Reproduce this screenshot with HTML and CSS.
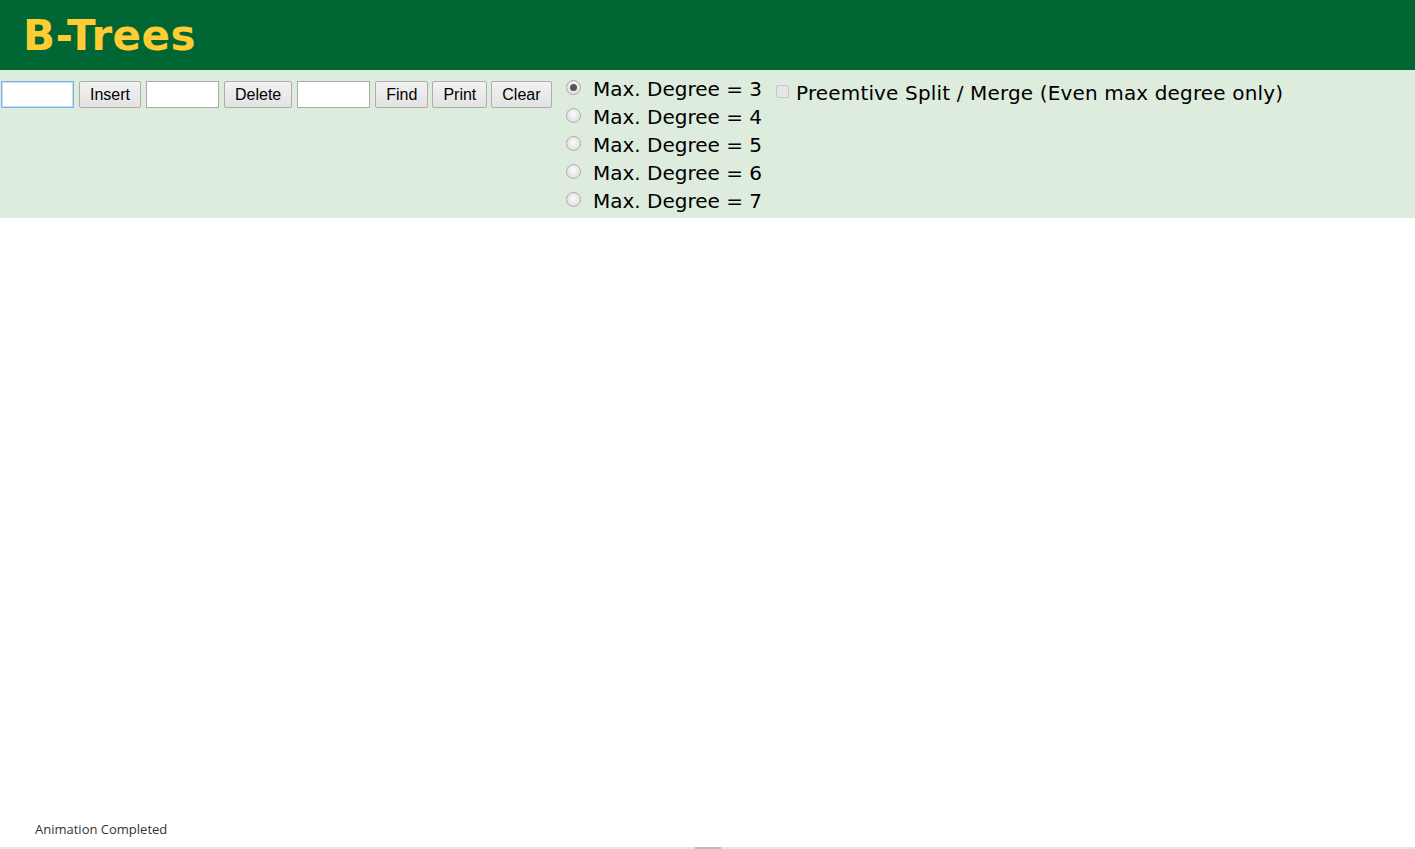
FILE: index.html
```html
<!DOCTYPE html>
<html lang="en">
<head>
  <meta charset="UTF-8">
  <title>B-Trees</title>
  <link rel="stylesheet" href="styles.css">
</head>
<body>
  <div class="header">
    <h1>B-Trees</h1>
  </div>

  <div class="controls">
    <div class="ops">
      <input type="text" class="field focused">
      <button>Insert</button>
      <input type="text" class="field">
      <button>Delete</button>
      <input type="text" class="field">
      <button>Find</button>
      <button>Print</button>
      <button>Clear</button>
    </div>

    <div class="degrees">
      <label class="opt"><input type="radio" name="deg" checked> Max. Degree = 3</label>
      <label class="opt"><input type="radio" name="deg"> Max. Degree = 4</label>
      <label class="opt"><input type="radio" name="deg"> Max. Degree = 5</label>
      <label class="opt"><input type="radio" name="deg"> Max. Degree = 6</label>
      <label class="opt"><input type="radio" name="deg"> Max. Degree = 7</label>
    </div>

    <label class="preempt"><input type="checkbox" disabled> Preemtive Split / Merge (Even max degree only)</label>
  </div>

  <div class="canvas">
    <div class="status">Animation Completed</div>
  </div>

  <div class="footer">
    <span class="grip"></span>
  </div>
</body>
</html>
```

FILE: styles.css
```css
* {
  box-sizing: border-box;
}

html, body {
  margin: 0;
  padding: 0;
  height: 100%;
}

body {
  font-family: 'DejaVu Sans', Verdana, sans-serif;
  background: #fff;
  color: #000;
  overflow: hidden;
}

.header {
  background: #006633;
  height: 70px;
  padding: 13px 0 0 23px;
}

.header h1 {
  margin: 0;
  color: #ffcc33;
  font-size: 42px;
  font-weight: bold;
  letter-spacing: 0.4px;
  line-height: 46px;
}

.controls {
  background: #ddecdd;
  height: 148px;
  display: flex;
  align-items: flex-start;
}

.ops {
  display: flex;
  gap: 5px;
  padding: 11px 0 0 1px;
  width: 565px;
}

.field {
  width: 73px;
  height: 27px;
  border: 1px solid #a9a9a9;
  background: #fff;
  font-size: 16px;
  padding: 2px 3px;
  margin: 0;
}

.field.focused {
  border-color: #7eb4ea;
  box-shadow: 0 0 0 1px #c5dcf3 inset;
}

.ops button {
  height: 27px;
  font-family: 'Liberation Sans', Arial, sans-serif;
  font-size: 16px;
  padding: 0 10px;
  margin: 0;
  border: 1px solid #adadad;
  border-radius: 2px;
  background: linear-gradient(#f2f2f2, #e2e2e2);
  color: #000;
}

.ops button + button {
  margin-left: -1px;
}

.degrees {
  display: flex;
  flex-direction: column;
  padding-top: 5px;
}

.opt {
  display: flex;
  align-items: center;
  height: 28px;
  font-size: 20px;
  white-space: nowrap;
}

.opt input {
  appearance: none;
  margin: -3px 12px 0 1px;
  width: 15px;
  height: 15px;
  border: 1px solid #aaa;
  border-radius: 50%;
  background: radial-gradient(circle at 50% 40%, #fbfbfb, #d8d8d8);
  position: relative;
}

.opt input:checked::after {
  content: '';
  position: absolute;
  top: 3px;
  left: 3px;
  width: 7px;
  height: 7px;
  border-radius: 50%;
  background: #555;
}

.preempt {
  display: flex;
  align-items: center;
  font-size: 20px;
  letter-spacing: 0.15px;
  padding: 11px 0 0 14px;
  white-space: nowrap;
}

.preempt input {
  appearance: none;
  margin: -3px 7px 0 0;
  width: 13px;
  height: 13px;
  border: 1px solid #c6c6c6;
  border-radius: 2px;
  background: #e6e6e6;
}

.canvas {
  height: 629px;
  display: flex;
  align-items: flex-end;
}

.status {
  font-family: 'Open Sans', 'DejaVu Sans', sans-serif;
  font-size: 13px;
  color: #333;
  padding: 0 0 9px 35px;
}

.footer {
  background: #ddecdd;
  height: 2px;
  display: flex;
  justify-content: center;
}

.grip {
  width: 26px;
  height: 2px;
  background: #bbb;
}
```
